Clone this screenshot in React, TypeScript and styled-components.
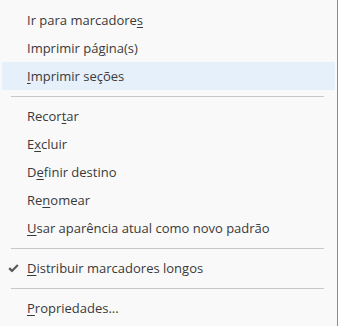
import styled, { createGlobalStyle } from "styled-components";

const GlobalStyle = createGlobalStyle`
  html, body {
    margin: 0;
    padding: 0;
    background: #f9f9f9;
  }
`;

const Menu = styled.ul`
  box-sizing: border-box;
  width: 338px;
  height: 326px;
  margin: 0;
  padding: 6px 2px 0 2px;
  list-style: none;
  background: #f9f9f9;
  border-right: 1px solid #8c8c8c;
  font-family: "Open Sans", "Noto Sans", sans-serif;
  font-size: 13px;
  color: #3a3a3a;
`;

const Item = styled.li<{ $active?: boolean }>`
  display: flex;
  align-items: center;
  height: 28px;
  padding-left: 25px;
  position: relative;
  background: ${({ $active }) => ($active ? "#e5f0fa" : "transparent")};
  white-space: nowrap;
`;

const Key = styled.span`
  text-decoration: underline;
  text-underline-offset: 2px;
`;

const Check = styled.svg`
  position: absolute;
  left: 6px;
  top: 50%;
  transform: translateY(-50%);
`;

const Separator = styled.li`
  height: 1px;
  margin: 6px 11px 5px 9px;
  background: #c8c8c8;
`;

export default function App() {
  return (
    <>
      <GlobalStyle />
      <Menu>
        <Item>
          Ir para marcadore<Key>s</Key>
        </Item>
        <Item>
          Imprimir pá<Key>g</Key>ina(s)
        </Item>
        <Item $active>
          <Key>I</Key>mprimir seções
        </Item>
        <Separator />
        <Item>
          Recor<Key>t</Key>ar
        </Item>
        <Item>
          E<Key>x</Key>cluir
        </Item>
        <Item>
          D<Key>e</Key>finir destino
        </Item>
        <Item>
          Re<Key>n</Key>omear
        </Item>
        <Item>
          <Key>U</Key>sar aparência atual como novo padrão
        </Item>
        <Separator />
        <Item>
          <Check width="11" height="9" viewBox="0 0 11 9">
            <path
              d="M1.2 4.6 L4 7.4 L9.8 1.4"
              fill="none"
              stroke="#5a5a5a"
              strokeWidth="2.2"
            />
          </Check>
          <Key>D</Key>istribuir marcadores longos
        </Item>
        <Separator />
        <Item>
          <Key>P</Key>ropriedades...
        </Item>
      </Menu>
    </>
  );
}
